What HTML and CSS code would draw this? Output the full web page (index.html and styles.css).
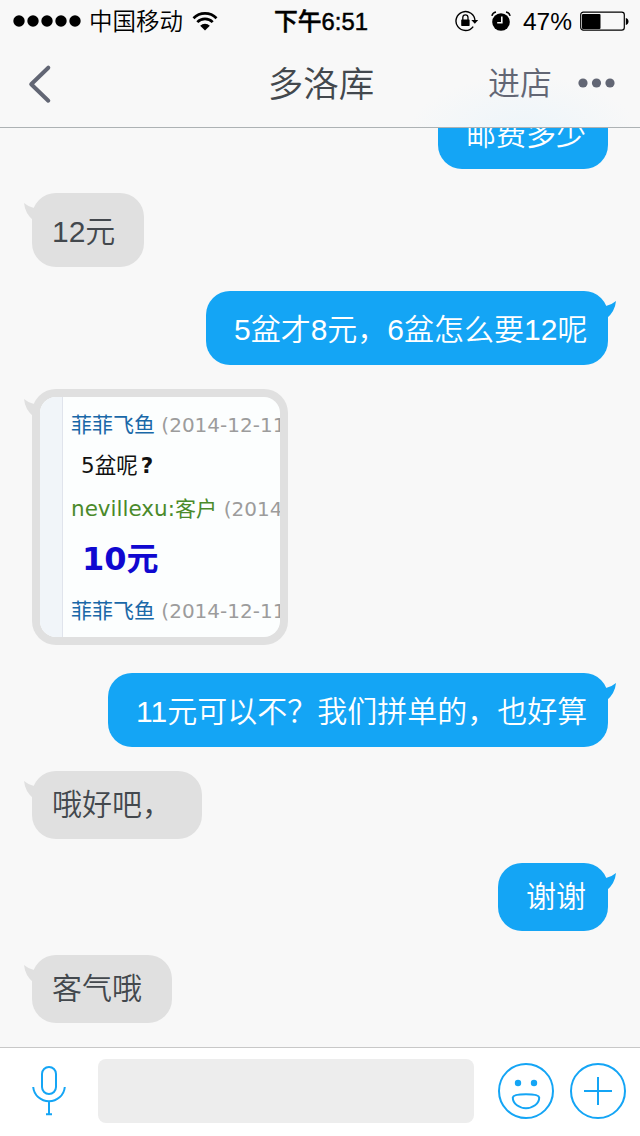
FILE: index.html
```html
<!DOCTYPE html>
<html lang="zh-CN">
<head>
    <meta charset="UTF-8">
    <meta name="viewport" content="width=device-width, initial-scale=1.0">
    <title>多洛库</title>
    <link rel="stylesheet" href="styles.css">
</head>
<body>

<header class="header">
    <!-- 状态栏 -->
    <div class="status">
        <div class="status-left">
            <svg width="68" height="12" viewBox="0 0 68 12">
                <circle cx="6" cy="6" r="5.7"/>
                <circle cx="20" cy="6" r="5.7"/>
                <circle cx="34" cy="6" r="5.7"/>
                <circle cx="48" cy="6" r="5.7"/>
                <circle cx="62" cy="6" r="5.7"/>
            </svg>
            <span class="carrier">中国移动</span>
            <svg class="wifi" width="26" height="19" viewBox="0 0 26 19">
                <path d="M1.5 6.2a16.2 16.2 0 0 1 23 0M5.3 10.1a10.9 10.9 0 0 1 15.4 0" fill="none" stroke="#000" stroke-width="2.7"/>
                <path d="M8.2 13.7a6.8 6.8 0 0 1 9.6 0L13 18.5z"/>
            </svg>
        </div>
        <div class="clock">下午6:51</div>
        <div class="status-right">
            <svg width="24" height="22" viewBox="0 0 24 22">
                <path d="M18.2 16.6a9.5 9.5 0 1 1 1.8-5.8" fill="none" stroke="#000" stroke-width="1.4"/>
                <path d="M16.3 10h6.9l-3.4 3.8z"/>
                <rect x="6.2" y="9.5" width="8.4" height="6.4" rx=".6"/>
                <path d="M7.8 10V7.6a2.6 2.8 0 0 1 5.2 0V10" fill="none" stroke="#000" stroke-width="1.3"/>
            </svg>
            <svg class="alarm" width="20" height="20" viewBox="0 0 20 20">
                <circle cx="10" cy="11" r="8.8"/>
                <path d="M.9 4.9A5 5 0 0 1 5 1M15 1a5 5 0 0 1 4.1 3.9" fill="none" stroke="#000" stroke-width="1.5"/>
                <path d="M10.8 5.5v6.300H6.200" fill="none" stroke="#f8f8f8" stroke-width="1.6"/>
            </svg>
            <span class="percent">47%</span>
            <svg width="50" height="20" viewBox="0 0 50 20">
                <rect x="1.7" y="1.2" width="43.600" height="18" rx="2.6" fill="none" stroke="#000" stroke-width="1.2"/>
                <rect x="3" y="3" width="18.500" height="15" rx="1"/>
                <path d="M46.8 7q2.700.6 2.700 3.500t-2.700 3.500z"/>
            </svg>
        </div>
    </div>

    <!-- 导航栏 -->
    <nav class="nav">
        <a class="back" href="#">
            <svg width="24" height="40" viewBox="0 0 24 40">
                <path d="M20.3 3.7L3.2 20.2l17.1 16.5" fill="none" stroke="#626674" stroke-width="4" stroke-linecap="round" stroke-linejoin="round"/>
            </svg>
        </a>
        <h1 class="title">多洛库</h1>
        <div class="actions">
            <a class="shop" href="#">进店</a>
            <svg width="37" height="10" viewBox="0 0 37 10" fill="#626674">
                <circle cx="5" cy="5" r="4.6"/>
                <circle cx="18.5" cy="5" r="4.6"/>
                <circle cx="32" cy="5" r="4.6"/>
            </svg>
        </div>
    </nav>
</header>

<!-- 聊天记录 -->
<main class="chat">
    <div class="bubble me">邮费多少</div>
    <div class="bubble other tall short">12元
        <svg class="tail" width="10" height="18" viewBox="0 0 10 18"><path d="M0 0Q4 3.500 10 5v13Q1 11 0 0z"/></svg>
    </div>
    <div class="bubble me tall medium">5盆才8元，6盆怎么要12呢
        <svg class="tail" width="10" height="18" viewBox="0 0 10 18"><path d="M10 0Q6 3.500 0 5v13Q9 11 10 0z"/></svg>
    </div>
    <div class="bubble other photo">
        <div class="shot">
            <div class="shot-gutter"></div>
            <div class="shot-text">
                <p class="line name"><b>菲菲飞鱼</b> <span>(2014-12-11</span></p>
                <p class="line ask">5盆呢<strong>?</strong></p>
                <p class="line client">nevillexu:<b>客户</b> <span>(2014</span></p>
                <p class="line price">10元</p>
                <p class="line name"><b>菲菲飞鱼</b> <span>(2014-12-11</span></p>
            </div>
        </div>
        <svg class="tail" width="10" height="18" viewBox="0 0 10 18"><path d="M0 0Q4 3.500 10 5v13Q1 11 0 0z"/></svg>
    </div>
    <div class="bubble me tall long">11元可以不？我们拼单的，也好算
        <svg class="tail" width="10" height="18" viewBox="0 0 10 18"><path d="M10 0Q6 3.500 0 5v13Q9 11 10 0z"/></svg>
    </div>
    <div class="bubble other">哦好吧，
        <svg class="tail" width="10" height="18" viewBox="0 0 10 18"><path d="M0 0Q4 3.500 10 5v13Q1 11 0 0z"/></svg>
    </div>
    <div class="bubble me">谢谢
        <svg class="tail" width="10" height="18" viewBox="0 0 10 18"><path d="M10 0Q6 3.500 0 5v13Q9 11 10 0z"/></svg>
    </div>
    <div class="bubble other">客气哦
        <svg class="tail" width="10" height="18" viewBox="0 0 10 18"><path d="M0 0Q4 3.500 10 5v13Q1 11 0 0z"/></svg>
    </div>
</main>

<!-- 输入栏 -->
<footer class="toolbar">
    <svg class="mic" width="34" height="50" viewBox="0 0 34 50">
        <rect x="10" y="1" width="14" height="27" rx="7"/>
        <path d="M1.2 21C2 29.5 9 35.3 17 35.3S32 29.5 32.8 21M17 35.3V48M14 48.3h6"/>
    </svg>
    <div class="input"></div>
    <svg class="smile" width="56" height="56" viewBox="0 0 56 56">
        <circle cx="28" cy="28" r="27"/>
        <circle class="eye" cx="20" cy="20" r="3.2"/>
        <circle class="eye" cx="36" cy="20" r="3.2"/>
        <path d="M14.8 34.5C15.500 30.2 40.500 30.2 41.2 34.5C41.3 41 34.5 45.2 28 45.2S14.7 41 14.8 34.5z"/>
    </svg>
    <svg class="plus" width="56" height="56" viewBox="0 0 56 56">
        <circle cx="28" cy="28" r="27"/>
        <path d="M28 14v28M14 28h28"/>
    </svg>
</footer>

</body>
</html>
```
FILE: styles.css
```css
* {
    box-sizing: border-box;
}
body {
    margin: 0;
    height: 1136px;
    display: flex;
    flex-direction: column;
    overflow: hidden;
    background-color: #f8f8f8;
    color: #43484d;
    font-family: "Liberation Sans", "Noto Sans CJK SC", sans-serif;
    font-weight: 350;
}
svg {
    display: block;
    flex: none;
}
a {
    color: inherit;
    text-decoration: none;
}

/* 顶部 */
.header {
    height: 128px;
    flex: none;
    border-bottom: 1px solid #adb2b4;
    background: radial-gradient(ellipse 115px 60px at 523px 135px, #edf5fa, #f8f8f8);
}
.status {
    height: 40px;
    padding: 0 11px 0 13px;
    display: grid;
    grid-template-columns: 1fr auto 1fr;
    align-items: center;
    color: #000;
}
.status-left,
.status-right {
    display: flex;
    align-items: center;
}
.status-right {
    justify-content: flex-end;
}
.carrier {
    margin: 0 9px 0 8px;
    padding-top: 2px;
    font-size: 23.5px;
    line-height: 40px;
}
.clock {
    padding-top: 1px;
    font-size: 23.8px;
    font-weight: 500;
    line-height: 40px;
    -webkit-text-stroke: 0.5px #000;
}
.alarm {
    margin: 0 12px 0 12px;
}
.percent {
    margin-right: 7px;
    padding-top: 2px;
    font-size: 24.5px;
}
.nav {
    height: 87px;
    padding: 0 25px 0 27px;
    display: grid;
    grid-template-columns: 1fr auto 1fr;
    align-items: center;
}
.back {
    padding-left: 1px;
}
.title {
    margin: 0;
    padding-bottom: 4px;
    font-size: 35.5px;
    font-weight: 350;
}
.actions {
    display: flex;
    justify-content: flex-end;
    align-items: center;
    gap: 26px;
    padding-bottom: 1px;
    color: #626674;
}
.shop {
    padding-bottom: 5px;
    font-size: 32px;
}

/* 聊天 */
.chat {
    flex: 1;
    min-height: 0;
    padding: 0 32px 24px;
    display: flex;
    flex-direction: column;
    justify-content: flex-end;
    gap: 24px;
    overflow: hidden;
}
.bubble {
    position: relative;
    flex: none;
    height: 68px;
    border-radius: 24px;
    font-size: 30px;
    line-height: 68px;
    white-space: nowrap;
}
.tall {
    height: 74px;
    line-height: 77px;
}
.me {
    align-self: flex-end;
    padding: 0 22px 0 28px;
    background-color: #14a5f5;
    color: #fff;
}
.other {
    align-self: flex-start;
    padding: 0 30px 0 20px;
    background-color: #e0e0e0;
}
.tail {
    position: absolute;
    top: 10px;
}
.me .tail {
    right: -8px;
    fill: #14a5f5;
}
.other .tail {
    left: -8px;
    fill: #e0e0e0;
}
.short {
    width: 112px;
}
.medium {
    width: 402px;
}
.long {
    width: 500px;
}
.photo {
    width: 256px;
    height: 256px;
    margin-bottom: 4px;
    padding: 8px;
}

/* 图片消息 */
.shot {
    height: 240px;
    display: flex;
    border-radius: 16px;
    overflow: hidden;
    background-color: #fcfefe;
    font-family: "DejaVu Sans", "Noto Sans CJK SC", sans-serif;
    font-weight: 400;
}
.shot-gutter {
    flex: none;
    width: 23px;
    border-right: 1px solid #e0e4ec;
    background-color: #f1f5f9;
}
.shot-text {
    padding: 7px 0 0 8px;
}
.line {
    margin: 0;
    height: 42px;
    font-size: 20px;
    line-height: 42px;
}
.line b {
    font-size: 21px;
    font-weight: 400;
}
.line span {
    color: #9c9c9c;
}
.name {
    color: #1968a8;
}
.ask {
    padding-left: 10px;
    color: #111;
    font-size: 21.5px;
    line-height: 40px;
}
.ask strong {
    padding-left: 3px;
}
.client {
    color: #4a8a2a;
    font-size: 21.5px;
}
.client span {
    font-size: 20px;
}
.price {
    height: 60px;
    padding-left: 11px;
    color: #1008d0;
    font-size: 32px;
    font-weight: 700;
    line-height: 59px;
}

/* 底部 */
.toolbar {
    height: 89px;
    flex: none;
    padding: 0 14px 2px 32px;
    display: flex;
    align-items: center;
    border-top: 1px solid #c8c8c8;
    background-color: #fff;
    fill: none;
    stroke: #14a5f5;
    stroke-width: 2;
}
.input {
    flex: 1;
    height: 64px;
    margin: 0 24px 0 32px;
    border-radius: 8px;
    background-color: #ededed;
}
.smile {
    margin-right: 16px;
}
.eye {
    fill: #14a5f5;
    stroke: none;
}
```
